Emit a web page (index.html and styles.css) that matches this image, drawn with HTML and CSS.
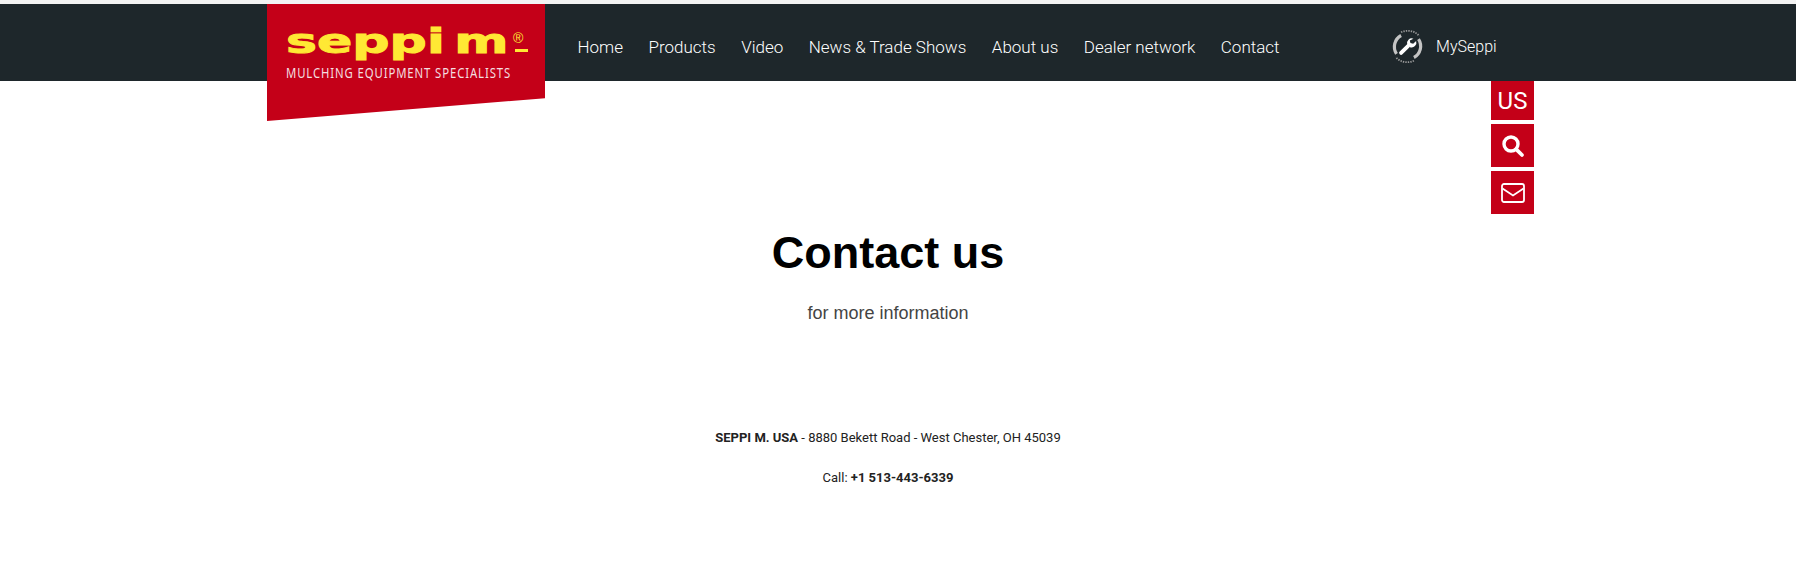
FILE: index.html
```html
<!DOCTYPE html>
<html lang="en">
<head>
    <meta charset="UTF-8">
    <meta name="viewport" content="width=device-width, initial-scale=1.0">
    <title>Contact us - Seppi M. USA</title>
    <link rel="stylesheet" href="styles.css">
</head>
<body>
    <header class="header">
        <div class="header-inner">
            <a class="logo" href="#">
                <span class="logo-word">seppi m</span>
                <span class="logo-reg">&reg;</span>
                <span class="logo-bar"></span>
                <span class="logo-tag">MULCHING EQUIPMENT SPECIALISTS</span>
            </a>
            <nav class="nav">
                <a href="#">Home</a>
                <a href="#">Products</a>
                <a href="#">Video</a>
                <a href="#">News &amp; Trade Shows</a>
                <a href="#">About us</a>
                <a href="#">Dealer network</a>
                <a href="#">Contact</a>
            </nav>
            <a class="myseppi" href="#">
                <svg class="myseppi-icon" viewBox="0 0 36 36" width="33" height="33" fill="none">
                    <path d="M6 26A14 14 0 0 1 11 6" stroke="#c4c4c4" stroke-width="3.500"/>
                    <path d="M30 10A14 14 0 0 1 25 30" stroke="#c4c4c4" stroke-width="3.500"/>
                    <path d="M11 2.500A17 17 0 0 1 31 6.500" stroke="#999" stroke-width="2" stroke-dasharray="1.500 1.200"/>
                    <path d="M25 33.500A17 17 0 0 1 5 29.500" stroke="#999" stroke-width="2" stroke-dasharray="1.500 1.200"/>
                    <path d="M11 25L18.500 17.500" stroke="#fff" stroke-width="4.200" stroke-linecap="round"/>
                    <path d="M24.500 9.500a5.200 5.200 0 0 0-6.800 6.500l3 2.700a5.200 5.200 0 0 0 6.700-6.600l-3.200 3-3-.8-.7-2.900z" fill="#fff"/>
                </svg>
                <span>MySeppi</span>
            </a>
        </div>
    </header>

    <div class="side-tools">
        <a class="side-btn side-lang" href="#">US</a>
        <a class="side-btn side-search" href="#">
            <svg viewBox="0 0 24 24" width="24" height="24" fill="none" stroke="#fff">
                <circle cx="10" cy="10" r="7" stroke-width="3.400"/>
                <path d="M15.300 15.300L21 21" stroke-width="3.800" stroke-linecap="round"/>
            </svg>
        </a>
        <a class="side-btn side-mail" href="#">
            <svg viewBox="0 0 24 20" width="24" height="20" fill="none" stroke="#fff" stroke-width="1.800">
                <rect x="1" y="1" width="22" height="18" rx="2"/>
                <path d="M1.500 5.500L12 12.500L22.500 5.500"/>
            </svg>
        </a>
    </div>

    <main class="content">
        <h1>Contact us</h1>
        <p class="subtitle">for more information</p>
        <p class="address"><strong>SEPPI M. USA</strong> - 8880 Bekett Road - West Chester, OH 45039</p>
        <p class="phone">Call: <strong>+1 513-443-6339</strong></p>
    </main>
</body>
</html>
```

FILE: styles.css
```css
html, body {
    margin: 0;
    padding: 0;
    height: 100%;
    overflow: hidden;
}
body {
    position: relative;
    background: #fff;
    font-family: Roboto, Arial, sans-serif;
    padding-top: 4px;
    box-sizing: border-box;
}
body::before {
    content: "";
    position: absolute;
    top: 0;
    left: 0;
    right: 0;
    height: 4px;
    background: #f3f3f3;
}
a {
    text-decoration: none;
    color: inherit;
}
.header {
    height: 77px;
    background: #1e272b;
    color: #fff;
}
.header-inner {
    display: flex;
    align-items: flex-start;
    padding-left: 267px;
}
.logo {
    flex: none;
    position: relative;
    box-sizing: border-box;
    width: 278px;
    height: 117px;
    padding: 15px 0 0 19px;
    background: #c40018;
    clip-path: polygon(0 0, 100% 0, 100% 80.500%, 0 100%);
    display: flex;
    flex-direction: column;
}
.logo-word {
    display: block;
    width: 150px;
    height: 46px;
    font-family: "DejaVu Sans", sans-serif;
    font-weight: 700;
    font-size: 42px;
    line-height: 46px;
    word-spacing: -7px;
    color: #ffe834;
    white-space: nowrap;
    transform: scale(1.240, 0.790);
    transform-origin: left center;
    -webkit-text-stroke: 1.200px #ffe834;
}
.logo-reg {
    position: absolute;
    left: 246px;
    top: 26px;
    font-family: "Liberation Sans", Arial, sans-serif;
    font-size: 14px;
    line-height: 16px;
    color: #ffe834;
}
.logo-bar {
    position: absolute;
    left: 248px;
    top: 45px;
    width: 13px;
    height: 3px;
    background: #ffe834;
}
.logo-tag {
    display: block;
    margin-top: 0;
    font-family: "Noto Sans", sans-serif;
    font-size: 14px;
    line-height: 16px;
    letter-spacing: 1.100px;
    color: #f4dfe0;
    white-space: nowrap;
    transform: scaleX(0.810);
    transform-origin: left center;
}
.nav {
    display: flex;
    gap: 25.500px;
    margin-left: 32.500px;
    padding-top: 33px;
    font-size: 17px;
    font-weight: 300;
    line-height: 20px;
    white-space: nowrap;
}
.myseppi {
    display: flex;
    align-items: center;
    gap: 12px;
    margin-left: 111.500px;
    padding-top: 26px;
    font-size: 16px;
    font-weight: 300;
}
.myseppi-icon {
    flex: none;
}
.side-tools {
    position: absolute;
    top: 81px;
    left: 1491px;
    width: 43px;
    display: flex;
    flex-direction: column;
    gap: 4px;
}
.side-btn {
    display: flex;
    align-items: center;
    justify-content: center;
    height: 43px;
    background: #c40018;
    color: #fff;
}
.side-lang {
    height: 39px;
    font-size: 24px;
    font-weight: 400;
}
.content {
    padding-right: 20px;
    text-align: center;
}
h1 {
    margin: 0;
    padding-top: 146px;
    font-family: "Liberation Sans", Arial, sans-serif;
    font-size: 45px;
    line-height: 52px;
    font-weight: 700;
    color: #000;
}
.subtitle {
    margin: 23px 0 0;
    font-family: "Liberation Sans", Arial, sans-serif;
    font-size: 18px;
    line-height: 22px;
    color: #444;
}
.address,
.phone {
    margin: 0;
    font-size: 13px;
    line-height: 18px;
    color: #222;
}
.address {
    margin-top: 105px;
}
.phone {
    margin-top: 22px;
}
```
